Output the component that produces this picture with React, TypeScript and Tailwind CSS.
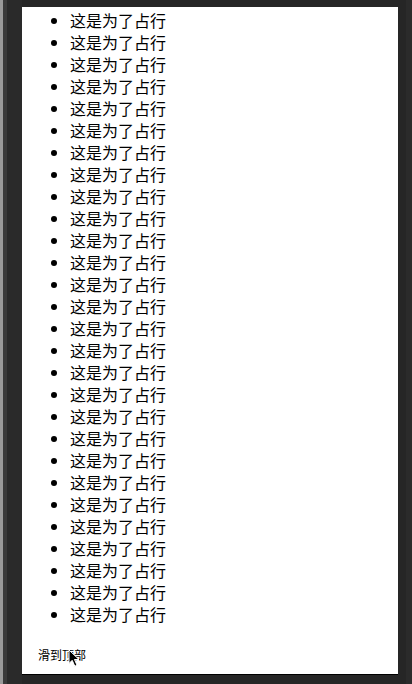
const rows = Array.from({ length: 28 }, (_, i) => i);

function Cursor() {
  return (
    <svg
      className="absolute left-[68px] top-[649px]"
      width="13"
      height="19"
      viewBox="0 0 13 19"
    >
      <path
        d="M1 1 L1 14.5 L4.2 11.3 L6.8 17.2 L9 16.2 L6.5 10.5 L11 10.5 Z"
        fill="#000"
        stroke="#fff"
        strokeWidth="1"
        strokeLinejoin="round"
      />
    </svg>
  );
}

export default function App() {
  return (
    <div className="relative flex h-[684px] w-[412px] overflow-hidden bg-[#262626]">
      <div className="w-[3px] bg-[#9a9a9a]" />
      <div className="w-[4px] bg-[#3a3a3a]" />
      <div className="w-[15px] bg-[#2a2a2a]" />
      <div className="mt-[7px] h-[668px] w-[376px] border-b border-black bg-white">
        <ul
          className="mt-[2px] list-disc pl-[48px] text-[16px] leading-[22px] text-black"
          style={{ fontFamily: '"Noto Sans CJK SC", "Noto Sans", sans-serif' }}
        >
          {rows.map((i) => (
            <li key={i}>这是为了占行</li>
          ))}
        </ul>
        <div
          className="mt-[21px] pl-[16px] text-[12px] leading-[17px] text-black"
          style={{ fontFamily: '"Noto Sans CJK SC", "Noto Sans", sans-serif' }}
        >
          滑到顶部
        </div>
      </div>
      <div className="w-[8px]" />
      <div className="flex-1 bg-[#2b2b2b]" />
      <Cursor />
    </div>
  );
}
